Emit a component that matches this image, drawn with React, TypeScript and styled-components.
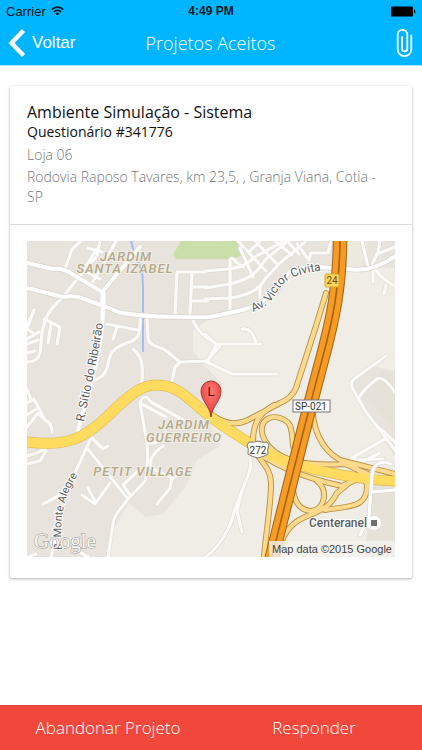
import React from 'react';
import styled, { createGlobalStyle } from 'styled-components';

const GlobalStyle = createGlobalStyle`
  * { box-sizing: border-box; }
  body { margin: 0; background: #fff; font-family: "Open Sans", "Noto Sans", sans-serif; }
`;

const Page = styled.div`
  min-height: 100vh;
  display: flex;
  flex-direction: column;
`;

const Header = styled.header`
  padding-bottom: 1px;
  background: #00b5ff;
  color: #fff;
  box-shadow: 0 1px 0 #a6e4fd;
`;

const StatusBar = styled.div`
  display: grid;
  grid-template-columns: 1fr auto 1fr;
  align-items: center;
  height: 22px;
  padding: 0 6px;
  color: #08151c;
  font: 13px "Liberation Sans", Arial, sans-serif;
`;

const StatusGroup = styled.div<{ $end?: boolean }>`
  display: flex;
  align-items: center;
  gap: 5px;
  justify-content: ${p => (p.$end ? 'flex-end' : 'flex-start')};
`;

const Clock = styled.time`
  font-size: 12px;
  font-weight: bold;
`;

const NavBar = styled.nav`
  display: grid;
  grid-template-columns: 1fr auto 1fr;
  align-items: center;
  height: 42px;
  padding: 0 9px 0 8px;
`;

const IconButton = styled.button<{ $end?: boolean }>`
  display: flex;
  align-items: center;
  gap: 6px;
  justify-self: ${p => (p.$end ? 'end' : 'start')};
  padding: 0;
  border: 0;
  background: none;
  color: #fff;
  font: 17px "Liberation Sans", Arial, sans-serif;
  cursor: pointer;
`;

const Title = styled.h1`
  margin: 0;
  font-size: 18px;
  line-height: 24px;
  font-weight: 300;
`;

const Main = styled.main`
  flex: 1;
  padding: 21px 10px;
`;

const Card = styled.article`
  border-radius: 2px;
  background: #fff;
  box-shadow: 0 1px 3px rgba(0, 0, 0, 0.32);
`;

const CardHeader = styled.div`
  padding: 15px 17px 17px;
  border-bottom: 1px solid #dcdcdc;
`;

const ProjectName = styled.h2`
  margin: 0;
  color: #111;
  font-size: 16px;
  line-height: 22px;
  font-weight: 400;
`;

const FormName = styled.p`
  margin: 0;
  color: #111;
  font-size: 14px;
  line-height: 18px;
`;

const Details = styled.div`
  display: grid;
  gap: 2px;
  padding-top: 4px;
`;

const Detail = styled.p`
  margin: 0;
  color: #777;
  font-size: 14px;
  line-height: 20px;
  font-weight: 300;
`;

const CardBody = styled.div`
  padding: 16px 17px 21px;
`;

const MapDrawing = styled.svg`
  display: block;
  width: 100%;
  height: auto;
  font-family: Roboto, sans-serif;
`;

const AreaLabel = styled.text`
  fill: #b3a98b;
  stroke: #f1eee6;
  stroke-width: 2px;
  paint-order: stroke;
  font-size: 13px;
  font-style: italic;
  font-weight: 500;
  letter-spacing: 1px;
  text-anchor: middle;
`;

const StreetLabel = styled.text<{ $size?: number; $weight?: number }>`
  fill: #5c5c5c;
  stroke: #fff;
  stroke-width: 2px;
  paint-order: stroke;
  font-size: ${p => p.$size ?? 12}px;
  font-weight: ${p => p.$weight ?? 400};
`;

const ShieldLabel = styled.text<{ $color?: string; $size?: number }>`
  fill: ${p => p.$color ?? '#333'};
  font-size: ${p => p.$size ?? 10}px;
  font-weight: 400;
  text-anchor: middle;
`;

const Watermark = styled.text`
  fill: #f7f5f1;
  stroke: #999;
  stroke-width: 1px;
  paint-order: stroke;
  font-family: "Liberation Serif", serif;
  font-size: 21px;
`;

const Attribution = styled.text`
  fill: #444;
  font-family: "Liberation Sans", Arial, sans-serif;
  font-size: 11px;
  text-anchor: end;
`;

const Footer = styled.footer`
  display: grid;
  grid-template-columns: 1fr 1fr;
  padding: 0 5px;
  border-top: 1px solid #d9483c;
  background: #f0483a;
`;

const FooterButton = styled.button`
  height: 44px;
  padding: 0 0 2px;
  border: 0;
  background: none;
  color: #fff;
  font: 300 17px "Open Sans", "Noto Sans", sans-serif;
  cursor: pointer;
`;

const WifiIcon = () => (
  <svg width="13" height="10" viewBox="0 0 13 10" fill="none" stroke="#08151c" strokeWidth="1.7" aria-hidden="true">
    <path d="M0.8 3.6C4 0.4 9 0.4 12.2 3.6M2.9 5.8c2-2 5.2-2 7.2 0" />
    <path d="M6.5 9.4 4.5 7.4c1.1-1.1 2.9-1.1 4 0z" fill="#08151c" stroke="none" />
  </svg>
);

const BatteryIcon = () => (
  <svg width="26" height="11" viewBox="0 0 26 11" aria-hidden="true">
    <rect x="1" y="0.5" width="22" height="10" rx="1" fill="#000" />
    <path d="M24 3.5c1.8.3 1.8 3.7 0 4z" fill="#000" />
  </svg>
);

const BackIcon = () => (
  <svg width="18" height="30" viewBox="0 0 18 30" fill="none" stroke="#fff" strokeWidth="4.4" aria-hidden="true">
    <path d="M15.5 2.5 3.5 15l12 12.5" />
  </svg>
);

const ClipIcon = () => (
  <svg width="18" height="30" viewBox="0 0 18 30" fill="none" stroke="#fff" strokeWidth="1.8" strokeLinecap="round" aria-hidden="true">
    <path d="M16.3 7.5v13.8a6.8 6.8 0 0 1-13.6 0V6.6a4.8 4.8 0 0 1 9.6 0v14.2a2.6 2.6 0 0 1-5.2 0V9" />
  </svg>
);

const minorRoads = [
  // north west
  'M65 268 72 248 81 240', 'M63 296 78 277 97 255 100 240',
  'M88 247 102 251M78 277 97 248M92 282 108 255 116 240M85 270 100 278',
  'M63 296C50 308 45 315 42 332L40 352Q38 361 27 361',
  'M27 325 34 309M34 309 27 328 33 332M27 338 39 331M27 343 38 339M27 352 35 350',
  'M44 318 60 326 57 343M51 323 48 342',
  'M27 388 31 399M27 426 38 412 45 419Q52 422 52 431M27 402 34 398 45 419M27 414 38 407',
  'M27 455 37 452 46 447M27 463 40 460 46 450',
  // around the river
  'M107 323 138 329M117 326 113 338',
  'M140 315C141 336 137 339 127 342C108 349 110 356 107 367Q104 376 95 379',
  'M147 315 148 336C149 346 159 345 165 349L180 361 175 366 172 380',
  'M133 348C145 358 142 368 142 385',
  'M180 361 207 360 220 345M192 316C194 325 202 335 212 340',
  // north
  'M175 314 177 271H205M192 271 190 313M192 286H208M192 300H208',
  'M205 270 228 268C252 265 249 257 262 252L284 240',
  'M205 287 230 283C254 277 258 269 266 258L288 240',
  'M205 298 230 297Q258 293 265 278L280 262 305 241',
  'M230 309V259Q232 255 236 261L243 266M240 247 253 276M238 240 266 270M255 240 277 263M275 240 292 254M287 240 299 253M250 250 260 240',
  'M260 286V300M297 243 309 259M309 259 311 252 328 252 331 240',
  // north east
  'M371 266 377 253 395 246M373 267V281M375 268Q382 278 395 285M386 284 384 293M362 240 368 266M380 240 378 252',
  // centre east
  'M205 333 216 343H261M256 342Q252 326 242 328',
  'M205 360 232 373H277M207 361 216 344',
  'M386 355 354 378Q349 382 353 388L366 411 395 449M358 399Q362 389 377 378 383 374 395 391',
  'M378 426 395 441M350 458 385 438M349 459 383 458M357 463 380 452',
  // south west
  'M92 437 103 448 108 445M87 447 128 498M90 439 75 472 60 494 43 503',
  'M82 494 95 503 110 482M88 487 95 500',
  'M123 484 130 494M123 484 138 470',
  'M128 498C116 513 114 516 113 523L108 556M128 498 145 480Q149 463 147 442L140 402Q144 391 151 401L185 420M140 402 166 416',
  'M147 442H155L166 431M163 445C150 454 148 464 153 468L172 477 170 487 157 503M172 477 184 471',
  'M57 532 51 556M81 552 88 556M28 556 36 553',
  // centre south
  'M250 457Q252 465 248 475L235 507Q229 537 206 556M242 490 237 510 242 531',
];

const interchange = [
  'M212 414C226 424 238 424 248 419L280 402Q292 397 296 387L316 325 326 292',
  'M274 404C258 413 253 424 253 440C253 457 271 463 271 482C271 505 266 530 264 556',
  'M291 459C264 450 258 430 264 421C272 411 290 418 291 428C294 439 290 449 301 458',
  'M312 394C311 423 319 447 340 459L395 473',
  'M264 444C282 462 311 465 345 463L370 474',
  'M258 452C280 467 309 478 342 485L360 477',
  'M293 477C291 500 300 510 312 510C326 507 328 488 317 480',
  'M277 556C281 539 286 524 305 516C325 508 331 504 337 492L348 483',
  'M325 509C349 505 368 507 367 484C364 473 357 465 344 461',
];

const mainAvenue = 'M27 441C67 446 84 438 109 414C130 393 142 384 156 384C181 384 190 401 212 417C236 434 263 453 291 462C326 472 362 479 395 480';
const expressway = 'M340 238C340 285 333 318 322 359C309 407 294 467 271 560';

const collectorRoads = [
  'M27 262 53 268Q64 267 72 273L102 291 140 246',
  'M27 287 63 296Q76 293 92 301L104 305',
  'M104 305 118 311Q145 317 210 316L238 310C274 303 273 282 292 270C306 263 329 267 348 268Q372 272 395 255',
];

const JobMap = () => (
  <MapDrawing viewBox="27 240 368 316" role="img" aria-label="Mapa do local">
    <defs>
      <path id="sitio" d="M84 421 C90 389 98 359 104 315" />
      <path id="victor" d="M253 311C267 306 271 301 277 291S290 273 326 269" />
      <path id="monte" d="M62 549C59 509 65 494 80 470" />
      <radialGradient id="pin" cx="0.5" cy="0.3" r="0.7">
        <stop offset="0" stopColor="#ff7a74" />
        <stop offset="1" stopColor="#e03a38" />
      </radialGradient>
    </defs>
    <rect x="27" y="240" width="368" height="316" fill="#e8e4dd" />
    <path d="M193 329 210 318 253 309 278 295 292 271 330 265 395 267V370L372 365 351 380 357 398 395 456V556H27V528L112 531 129 502 145 516 163 513 185 487 197 459 220 445 205 410 222 382 207 367 193 350Z" fill="#efede5" />
    <path d="M27 528H113L106 556H27Z" fill="#e8e4dd" />
    <path d="M365 556 372 476 395 486V556ZM358 390 384 369 395 378V429Z" fill="#e6e2da" />
    <path d="M338 240H368L360 268 338 267Z" fill="#ece9e1" />
    <path d="M174 252 181 240H236L245 253 233 258H176Q173 256 174 252Z" fill="#c9dea9" />
    <path d="M131 240C136 262 143 263 143 284V351" fill="none" stroke="#a3bff1" strokeWidth="2" />

    <g fill="none" strokeLinecap="round" strokeLinejoin="round">
      {minorRoads.map(d => <path key={d} d={d} stroke="#dedad2" strokeWidth="4.4" />)}
      {minorRoads.map(d => <path key={d} d={d} stroke="#fbfaf8" strokeWidth="3.2" />)}
      {collectorRoads.map(d => <path key={d} d={d} stroke="#dad6ce" strokeWidth="5.5" />)}
      <g stroke="#fff">
        {collectorRoads.map(d => <path key={d} d={d} strokeWidth="4" />)}
        <path d="M103 293V305" strokeWidth="5" />
        <path d="M103 305C103 350 87 395 80 421L78 433" strokeWidth="4" />
        <path d="M206 417C223 428 238 442 253 449" strokeWidth="4" />
      </g>

      <path d={mainAvenue} stroke="#dfbd57" strokeWidth="11" />
      {interchange.map(d => <path key={d} d={d} stroke="#b98e42" strokeWidth="6" />)}
      {interchange.map(d => <path key={d} d={d} stroke="#fbda8e" strokeWidth="4.2" />)}
      <path d={mainAvenue} stroke="#ffdc60" strokeWidth="9.6" />
      <path d={expressway} stroke="#9b681c" strokeWidth="14.5" />
      <path d={expressway} stroke="#f89b25" strokeWidth="12.5" />
      <path d={expressway} stroke="#a46510" strokeWidth="1.6" />
      <path d="M360 534 369 515 372 474C373 462 383 459 391 463M371 491 395 489" stroke="#dedad2" strokeWidth="4.5" />
      <path d="M360 534 369 515 372 474C373 462 383 459 391 463M371 491 395 489" stroke="#fff" strokeWidth="3" />
    </g>

    <AreaLabel x="126" y="260">JARDIM</AreaLabel>
    <AreaLabel x="125" y="272">SANTA IZABEL</AreaLabel>
    <AreaLabel x="184" y="428">JARDIM</AreaLabel>
    <AreaLabel x="184" y="441">GUERREIRO</AreaLabel>
    <AreaLabel x="143" y="475">PETIT VILLAGE</AreaLabel>
    <StreetLabel><textPath href="#sitio">R. Sítio do Ribeirão</textPath></StreetLabel>
    <StreetLabel><textPath href="#victor">Av. Victor Civita</textPath></StreetLabel>
    <StreetLabel $size={11}><textPath href="#monte">R. Monte Alegre</textPath></StreetLabel>

    <rect x="325" y="273" width="14" height="13" rx="1" fill="#ffd558" stroke="#d7a62d" />
    <ShieldLabel x="332" y="283" $color="#654915">24</ShieldLabel>
    <rect x="293" y="399" width="37" height="12" fill="#fff" stroke="#777" />
    <ShieldLabel x="311" y="409">SP-021</ShieldLabel>
    <path d="M249 441Q253 442 258 440Q263 442 267 441L269 444Q267 448 268 453Q263 456 258 457Q252 456 248 453Q249 448 247 444Z" fill="#fff" stroke="#777" />
    <ShieldLabel x="258" y="453">272</ShieldLabel>
    <circle cx="374" cy="522" r="7" fill="#fff" />
    <rect x="371" y="519" width="6" height="6" fill="#756f68" />
    <StreetLabel $weight={500} x="309" y="526">Centeranel</StreetLabel>

    <path d="M211 416C210 405 201 400 201 390a10 10 0 0 1 20 0C221 400 212 405 211 416Z" fill="url(#pin)" stroke="#a93532" />
    <ShieldLabel x="211" y="395" $size={13} $color="#421313">L</ShieldLabel>

    <Watermark x="34" y="547">Google</Watermark>
    <rect x="269" y="540" width="126" height="16" fill="#f4f2ed" fillOpacity="0.8" />
    <Attribution x="392" y="552">Map data ©2015 Google</Attribution>
  </MapDrawing>
);

export default function App() {
  return (
    <Page>
      <GlobalStyle />
      <Header>
        <StatusBar>
          <StatusGroup><span>Carrier</span><WifiIcon /></StatusGroup>
          <Clock>4:49 PM</Clock>
          <StatusGroup $end><BatteryIcon /></StatusGroup>
        </StatusBar>
        <NavBar>
          <IconButton type="button"><BackIcon />Voltar</IconButton>
          <Title>Projetos Aceitos</Title>
          <IconButton type="button" $end aria-label="Anexos"><ClipIcon /></IconButton>
        </NavBar>
      </Header>
      <Main>
        <Card>
          <CardHeader>
            <ProjectName>Ambiente Simulação - Sistema</ProjectName>
            <FormName>Questionário #341776</FormName>
            <Details>
              <Detail>Loja 06</Detail>
              <Detail>Rodovia Raposo Tavares, km 23,5, , Granja Viana, Cotia - SP</Detail>
            </Details>
          </CardHeader>
          <CardBody><JobMap /></CardBody>
        </Card>
      </Main>
      <Footer>
        <FooterButton type="button">Abandonar Projeto</FooterButton>
        <FooterButton type="button">Responder</FooterButton>
      </Footer>
    </Page>
  );
}
